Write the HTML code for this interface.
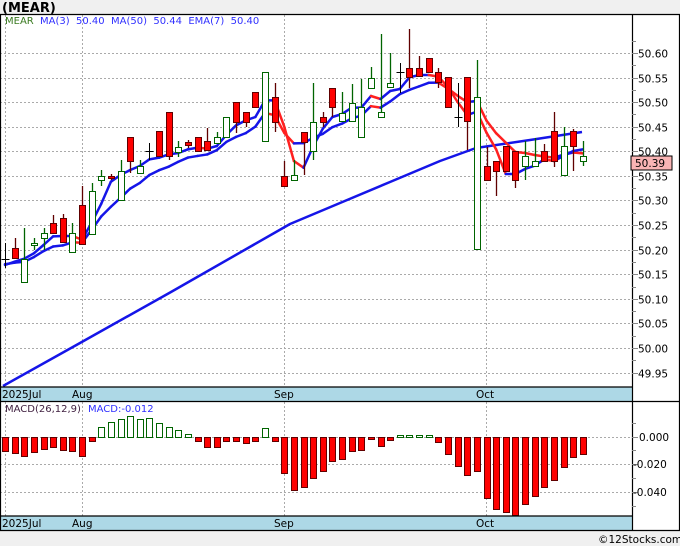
<!DOCTYPE html>
<html><head><meta charset="utf-8">
<style>
html,body{margin:0;padding:0;background:#f0f0f0;width:680px;height:546px;overflow:hidden}
svg{display:block}
text{font-family:"DejaVu Sans","Liberation Sans",sans-serif}
</style></head>
<body>
<svg id="s" width="680" height="546" xmlns="http://www.w3.org/2000/svg">
<rect x="0" y="14" width="680" height="517" fill="#fff"/>
<text x="2" y="12" font-size="13" font-weight="bold" fill="#000">(MEAR)</text>
<g id="grid"></g>
<g id="lines"></g>
<g id="cand"></g>
<g id="macd"></g>
<rect x="0" y="387" width="632" height="14" fill="#add8e6"/>
<rect x="0" y="516" width="632" height="14" fill="#add8e6"/>
<g font-size="10.5" fill="#000">
<text x="2" y="398">2025Jul</text><text x="72" y="398">Aug</text><text x="274" y="398">Sep</text><text x="476" y="398">Oct</text>
<text x="2" y="527">2025Jul</text><text x="72" y="527">Aug</text><text x="274" y="527">Sep</text><text x="476" y="527">Oct</text>
</g>
<g stroke="#000" stroke-width="1.2" fill="none">
<line x1="0" y1="14.5" x2="680" y2="14.5"/>
<line x1="0.5" y1="14" x2="0.5" y2="531"/>
<line x1="679.5" y1="14" x2="679.5" y2="531"/>
<line x1="632.5" y1="14" x2="632.5" y2="531"/>
<line x1="0" y1="387" x2="632" y2="387"/>
<line x1="0" y1="401.5" x2="680" y2="401.5"/>
<line x1="0" y1="516" x2="632" y2="516"/>
<line x1="0" y1="530.5" x2="680" y2="530.5"/>
</g>
<text x="5" y="24" font-size="10" fill="#3a7a20">MEAR</text>
<text x="40" y="24" font-size="10" fill="#3030ff" xml:space="preserve">MA(3)  50.40  MA(50)  50.44  EMA(7)  50.40</text>
<text x="5" y="412" font-size="10" fill="#402040">MACD(26,12,9)</text>
<text x="88" y="412" font-size="10" fill="#3030ff">MACD:-0.012</text>
<g id="axis"></g>
<rect x="631" y="156" width="41" height="14" fill="#f9b4b4" stroke="#000" stroke-width="1"/>
<text x="635" y="167" font-size="10.5" fill="#000">50.39</text>
<text x="598" y="543" font-size="10.5" fill="#000">©12Stocks.com</text>
</svg>
<script>
var NS="http://www.w3.org/2000/svg";
function el(p,t,a){var e=document.createElementNS(NS,t);for(var k in a)e.setAttribute(k,a[k]);document.getElementById(p).appendChild(e);return e;}
function Y(p){return 348-(p-50)*491.7;}
for(var p=49.95;p<50.63;p+=0.05){var y=Math.round(Y(p))+0.5;el("grid","line",{x1:0,x2:632,y1:y,y2:y,stroke:"#aaa","stroke-dasharray":"2,2"});
 el("axis","line",{x1:632,x2:638,y1:y,y2:y,stroke:"#888"});
 var ym=Math.round(Y(p+0.025))+0.5; if(p<50.6) el("axis","line",{x1:632,x2:636,y1:ym,y2:ym,stroke:"#888"});
 var t=el("axis","text",{x:638,y:y+4,"font-size":"10.5",fill:"#000"});t.textContent=p.toFixed(2);}
[[437,"0.000",639],[464,"-0.020",633],[492,"-0.040",633]].forEach(function(a){
 el("grid","line",{x1:0,x2:632,y1:a[0]+.5,y2:a[0]+.5,stroke:"#aaa","stroke-dasharray":"2,2"});
 el("axis","line",{x1:632,x2:638,y1:a[0]+.5,y2:a[0]+.5,stroke:"#888"});
 var t=el("axis","text",{x:a[2],y:a[0]+4,"font-size":"10.5",fill:"#000"});t.textContent=a[1];});
[423,450,478,506].forEach(function(y){el("axis","line",{x1:632,x2:636,y1:y+.5,y2:y+.5,stroke:"#888"});});
[5,82,284,486].forEach(function(x){el("grid","line",{x1:x+.5,x2:x+.5,y1:15,y2:387,stroke:"#aaa","stroke-dasharray":"2,2"});el("grid","line",{x1:x+.5,x2:x+.5,y1:402,y2:516,stroke:"#aaa","stroke-dasharray":"2,2"});});
var D=[["c",259,259,243,268],["r",248,258,238,258],["g",259,282,228,282],["g",243,245,238,250],["g",233,238,228,250],["r",223,233,215,233],["r",218,242,214,242],["g",233,252,223,252],["r",205,244,186,244],["g",191,234,183,234],
["g",176,180,170,186],["r",176,178,174,180],["g",171,200,160,200],["r",137,161,137,173],["g",166,173,160,173],["c",151,151,143,160],["r",131,156,131,156],["r",112,156,112,160],["g",147,152,141,157],["r",142,145,140,148],
["r",137,151,137,151],["r",141,150,128,150],["g",137,143,132,143],["g",117,137,117,137],["r",102,122,102,133],["r",112,122,112,127],["r",92,107,92,107],["g",72,141,72,141],["r",97,122,83,132],["r",176,186,161,186],
["g",175,180,160,180],["r",132,142,132,175],["g",122,151,83,160],["r",117,122,112,127],["r",88,107,88,117],["g",113,121,92,121],["g",103,121,84,121],["g",107,137,79,137],["g",78,88,67,88],["g",112,117,34,117],
["g",83,87,53,87],["c",72,72,63,93],["r",68,77,29,88],["r",68,76,56,76],["r",58,72,58,72],["r",72,82,68,88],["r",77,107,77,107],["c",117,117,83,127],["r",77,121,77,150],["g",97,249,60,249],
["r",166,180,147,180],["r",161,171,161,196],["r",146,171,146,171],["r",151,180,151,188],["g",156,166,141,180],["g",161,166,138,166],["r",151,161,144,161],["r",131,161,112,167],["g",146,175,127,175],["r",131,146,129,171],["g",156,161,141,166]];
function X(i){return 5+9.63*i;}
var C=D.map(function(d){return d[0]=="g"?d[1]:(d[0]=="r"?d[2]:d[1]);});
el("lines","polyline",{points:"3,386 80,343 171,292 290,224 340,203 390,182 440,161 476,148 530,140 582,132",fill:"none",stroke:"#1515e8","stroke-width":2.5,"stroke-linejoin":"round"});
var ma=[],em=[];var e=266;
for(var i=0;i<C.length;i++){var a=C.slice(Math.max(0,i-2),i+1);while(a.length<3)a.unshift(268);ma.push(a.reduce(function(s,v){return s+v;},0)/3);e=e+(C[i]-e)*0.25;em.push(e);}
[em,ma].forEach(function(L){for(var i=1;i<L.length;i++){el("lines","line",{x1:X(i-1),y1:L[i-1],x2:X(i),y2:L[i],stroke:L[i]>L[i-1]+0.3?"#ff2020":"#1515e8","stroke-width":2.5,"stroke-linecap":"round"});}});
D.forEach(function(d,i){var x=X(i),xr=Math.round(x)+.5;
 if(d[0]=="c"){el("cand","line",{x1:xr,x2:xr,y1:d[3],y2:d[4],stroke:"#000"});el("cand","line",{x1:xr-4,x2:xr+4,y1:d[1]+.5,y2:d[1]+.5,stroke:"#000"});return;}
 var col=d[0]=="g"?"#006400":"#600000";
 el("cand","line",{x1:xr,x2:xr,y1:d[3],y2:d[4],stroke:col,"stroke-width":1.3});
 el("cand","rect",{x:xr-3,y:d[1]+.5,width:6,height:Math.max(1,d[2]-d[1]),fill:d[0]=="g"?"#fff":"#f00",stroke:col});});
var M=[451,453,456,452,449,447,450,451,456,441,427,422,419,416,419,418,423,427,430,434,441,447,447,441,441,443,441,428,441,473,490,487,478,471,461,459,451,450,439,446,440,435,435,435,435,442,454,466,475,471,498,509,512,515,504,496,487,480,467,457,454];
var G={10:1,11:1,12:1,13:1,14:1,15:1,16:1,17:1,18:1,19:1,27:1,41:1,42:1,43:1,44:1};
M.forEach(function(v,i){var x=Math.round(X(i))-3+.5;
 if(G[i])el("macd","rect",{x:x,y:v+.5,width:6,height:Math.max(1,437-v),fill:"#fff",stroke:"#006400"});
 else el("macd","rect",{x:x,y:437.5,width:6,height:Math.min(v,515)-437,fill:"#f00",stroke:"#600000"});});
</script>
</body></html>
